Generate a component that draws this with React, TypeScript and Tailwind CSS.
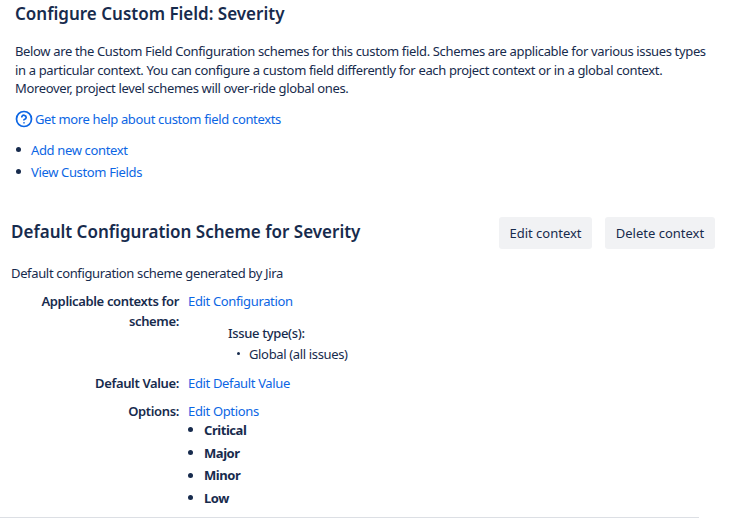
import { CircleHelp } from "lucide-react";

const link = "text-[#0c66e4]";

function Row({ label, children }: { label: React.ReactNode; children: React.ReactNode }) {
  return (
    <div className="flex">
      <div className="w-[179px] shrink-0 text-right font-semibold tracking-[-0.35px]">{label}</div>
      <div className="pl-[9px]">{children}</div>
    </div>
  );
}

export default function App() {
  return (
    <div className="h-[518px] w-[755px] overflow-hidden bg-white text-[13px] leading-[20px] tracking-[-0.35px] text-[#172b4d] [font-family:'Noto_Sans',sans-serif]">
      <div className="pl-[15px] pr-[20px] pt-[2px]">
        <h1 className="text-[17px] leading-[24px] font-semibold tracking-normal">Configure Custom Field: Severity</h1>
        <p className="mt-[16px] leading-[18.5px] whitespace-nowrap">
          Below are the Custom Field Configuration schemes for this custom field. Schemes are applicable for various issues types<br />
          in a particular context. You can configure a custom field differently for each project context or in a global context.<br />
          Moreover, project level schemes will over-ride global ones.
        </p>
        <div className="mt-[11px] flex items-center gap-[2px]">
          <CircleHelp size={18} className="text-[#0c66e4]" strokeWidth={2.3} />
          <a className={link}>Get more help about custom field contexts</a>
        </div>
        <ul className="mt-[11px] space-y-[2px]">
          <li className="flex items-center"><span className="ml-px h-[5px] w-[5px] rounded-full bg-[#172b4d]" /><a className={`${link} ml-[10px]`}>Add new context</a></li>
          <li className="flex items-center"><span className="ml-px h-[5px] w-[5px] rounded-full bg-[#172b4d]" /><a className={`${link} ml-[10px]`}>View Custom Fields</a></li>
        </ul>
      </div>

      <div className="mt-[35px] flex items-center justify-between pl-[11px] pr-[40px]">
        <h2 className="pb-[2px] text-[17px] leading-[24px] font-semibold tracking-normal">Default Configuration Scheme for Severity</h2>
        <div className="flex gap-[13px] tracking-normal">
          <button className="h-[32px] w-[93px] rounded-[3px] bg-[#f1f2f4]">Edit context</button>
          <button className="h-[32px] w-[110px] rounded-[3px] bg-[#f1f2f4]">Delete context</button>
        </div>
      </div>

      <p className="mt-[14px] pl-[11px]">Default configuration scheme generated by Jira</p>

      <div className="mt-[8px] w-[699px] border-b border-[#dcdfe4] pb-[8px]">
        <Row label={<>Applicable contexts for<br />scheme:</>}>
          <a className={link}>Edit Configuration</a>
          <div className="mt-[12px] pl-[40px] font-medium">Issue type(s):</div>
          <div className="mt-[1px] flex items-center pl-[49px]">
            <span className="h-[3px] w-[3px] rounded-full bg-[#172b4d]" />
            <span className="ml-[9px]">Global (all issues)</span>
          </div>
        </Row>
        <div className="mt-[9px]">
          <Row label="Default Value:"><a className={link}>Edit Default Value</a></Row>
        </div>
        <div className="mt-[8px]">
          <Row label="Options:">
            <a className={link}>Edit Options</a>
            <ul className="-mt-[2px] font-bold tracking-[-0.45px]">
              {["Critical", "Major", "Minor", "Low"].map((o) => (
                <li key={o} className="flex h-[22.7px] items-center">
                  <span className="h-[5px] w-[5px] rounded-full bg-[#172b4d]" />
                  <span className="ml-[11px]">{o}</span>
                </li>
              ))}
            </ul>
          </Row>
        </div>
      </div>
    </div>
  );
}
